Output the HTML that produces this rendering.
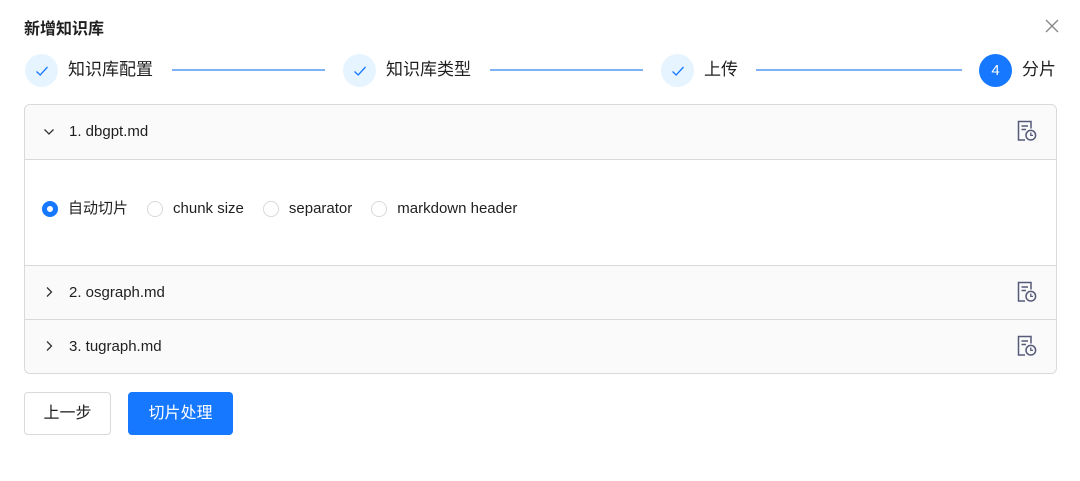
<!DOCTYPE html>
<html><head><meta charset="utf-8"><style>
*{box-sizing:border-box;margin:0;padding:0}
body{width:1080px;height:481px;background:#fff;font-family:"Liberation Sans","Noto Sans CJK SC",sans-serif;color:rgba(0,0,0,.88);position:relative;overflow:hidden}
.abs{position:absolute}
.title{left:24px;top:19px;font-size:16px;font-weight:bold;line-height:22px}
.close{left:1044px;top:18px}
.circ{width:33px;height:33px;border-radius:50%;top:54px;display:flex;align-items:center;justify-content:center;background:#e6f4ff}
.lbl{top:59px;font-size:17px;line-height:22px}
.line{top:69px;height:2px;background:#7fb1f7}
.box{left:24px;top:104px;width:1033px;height:270px;border:1px solid #d9d9d9;border-radius:6px;overflow:hidden}
.hd{position:absolute;left:0;width:100%;height:55px;background:#fafafa;font-size:15px;line-height:53px;padding-left:44px}
.arrow{position:absolute;left:18px;top:0}
.ico{position:absolute;right:19px;top:15px}
.radio{display:inline-flex;align-items:center;font-size:15px;margin-right:19px;line-height:20px}
.rb{width:16px;height:16px;border-radius:50%;border:1px solid #d9d9d9;margin-right:10px;background:#fff}
.rb.on{border:5px solid #1677ff}
.btn{top:392px;height:43px;border-radius:4px;font-size:16px;line-height:41px;text-align:center}
</style></head><body>
<div class="abs title">新增知识库</div>
<svg class="abs close" width="16" height="16" viewBox="0 0 16 16"><path d="M2 2L14 14M14 2L2 14" stroke="#888" stroke-width="1.4"/></svg>

<div class="abs circ" style="left:25px"><svg width="14" height="14" viewBox="0 0 14 14"><path d="M1.5 7.5L5.2 11L12.5 3" fill="none" stroke="#1677ff" stroke-width="1.3"/></svg></div>
<div class="abs lbl" style="left:68px">知识库配置</div>
<div class="abs line" style="left:172px;width:153px"></div>
<div class="abs circ" style="left:343px"><svg width="14" height="14" viewBox="0 0 14 14"><path d="M1.5 7.5L5.2 11L12.5 3" fill="none" stroke="#1677ff" stroke-width="1.3"/></svg></div>
<div class="abs lbl" style="left:386px">知识库类型</div>
<div class="abs line" style="left:490px;width:153px"></div>
<div class="abs circ" style="left:661px"><svg width="14" height="14" viewBox="0 0 14 14"><path d="M1.5 7.5L5.2 11L12.5 3" fill="none" stroke="#1677ff" stroke-width="1.3"/></svg></div>
<div class="abs lbl" style="left:704px">上传</div>
<div class="abs line" style="left:756px;width:206px"></div>
<div class="abs circ" style="left:979px;background:#1677ff;color:#fff;font-size:15px">4</div>
<div class="abs lbl" style="left:1022px">分片</div>

<div class="abs box">
  <div class="hd" style="top:0;border-bottom:1px solid #d9d9d9">
    <svg class="arrow" width="12" height="55" viewBox="0 0 12 55"><path d="M1.5 24.5L6 29L10.5 24.5" fill="none" stroke="#333" stroke-width="1.3"/></svg>1. dbgpt.md
    <svg class="ico" width="20" height="22" viewBox="0 0 20 22"><path d="M8 20H1.5V1.5H14V8.5" fill="none" stroke="#555a78" stroke-width="1.5"/><path d="M4.5 6H11M4.5 9.5H9" stroke="#555a78" stroke-width="1.5"/><circle cx="13.8" cy="15.2" r="4.8" fill="none" stroke="#555a78" stroke-width="1.5"/><path d="M13.8 12.5V15.4H16" fill="none" stroke="#555a78" stroke-width="1.3"/></svg>
  </div>
  <div style="position:absolute;top:55px;left:0;width:100%;height:105px;background:#fff;padding:39px 0 0 17px;display:flex;align-items:flex-start">
    <span class="radio"><span class="rb on"></span>自动切片</span>
    <span class="radio"><span class="rb"></span>chunk size</span>
    <span class="radio"><span class="rb"></span>separator</span>
    <span class="radio"><span class="rb"></span>markdown header</span>
  </div>
  <div class="hd" style="top:160px;border-top:1px solid #d9d9d9;height:55px">
    <svg class="arrow" width="12" height="55" viewBox="0 0 12 55"><path d="M4 21.5L8.5 26L4 30.5" fill="none" stroke="#333" stroke-width="1.3"/></svg>2. osgraph.md
    <svg class="ico" width="20" height="22" viewBox="0 0 20 22"><path d="M8 20H1.5V1.5H14V8.5" fill="none" stroke="#555a78" stroke-width="1.5"/><path d="M4.5 6H11M4.5 9.5H9" stroke="#555a78" stroke-width="1.5"/><circle cx="13.8" cy="15.2" r="4.8" fill="none" stroke="#555a78" stroke-width="1.5"/><path d="M13.8 12.5V15.4H16" fill="none" stroke="#555a78" stroke-width="1.3"/></svg>
  </div>
  <div class="hd" style="top:214px;border-top:1px solid #d9d9d9">
    <svg class="arrow" width="12" height="55" viewBox="0 0 12 55"><path d="M4 21.5L8.5 26L4 30.5" fill="none" stroke="#333" stroke-width="1.3"/></svg>3. tugraph.md
    <svg class="ico" width="20" height="22" viewBox="0 0 20 22"><path d="M8 20H1.5V1.5H14V8.5" fill="none" stroke="#555a78" stroke-width="1.5"/><path d="M4.5 6H11M4.5 9.5H9" stroke="#555a78" stroke-width="1.5"/><circle cx="13.8" cy="15.2" r="4.8" fill="none" stroke="#555a78" stroke-width="1.5"/><path d="M13.8 12.5V15.4H16" fill="none" stroke="#555a78" stroke-width="1.3"/></svg>
  </div>
</div>

<div class="abs btn" style="left:24px;width:87px;border:1px solid #d9d9d9">上一步</div>
<div class="abs btn" style="left:128px;width:105px;background:#1677ff;color:#fff;border:1px solid #1677ff">切片处理</div>
</body></html>
